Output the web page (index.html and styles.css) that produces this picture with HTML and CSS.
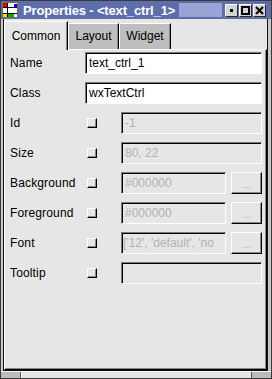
FILE: index.html
```html
<!DOCTYPE html>
<html lang="en">
<head>
    <meta charset="UTF-8">
    <title>Properties - &lt;text_ctrl_1&gt;</title>
    <link rel="stylesheet" href="styles.css">
</head>
<body>

    <div class="window">
        <div class="titlebar">
            <svg class="app-icon" width="16" height="16" viewBox="0 0 16 16">
                <rect x="0.5" y="0.5" width="15" height="15" fill="#fff" stroke="#6a6a6a"/>
                <rect x="1" y="1" width="4" height="4" fill="#e00000"/>
                <rect x="12" y="2" width="3" height="4" fill="#0000e0"/>
                <line x1="1" y1="5.5" x2="15" y2="5.5" stroke="#000"/>
                <line x1="5.5" y1="1" x2="5.5" y2="15" stroke="#000"/>
                <line x1="1" y1="11.5" x2="15" y2="11.5" stroke="#000"/>
                <rect x="1" y="12" width="4" height="3" fill="#f0e000"/>
                <rect x="6" y="12" width="6" height="3" fill="#00b000"/>
            </svg>
            <span class="title">Properties - &lt;text_ctrl_1&gt;</span>
            <span class="dots"></span>
            <div class="wm-buttons">
                <span class="wm-btn">
                    <svg width="11" height="11" viewBox="0 0 11 11"><rect x="4" y="4" width="3" height="3" fill="#000"/></svg>
                </span>
                <span class="wm-btn">
                    <svg width="11" height="11" viewBox="0 0 11 11"><rect x="2" y="2" width="7" height="7" fill="none" stroke="#000" stroke-width="2"/></svg>
                </span>
                <span class="wm-btn">
                    <svg width="11" height="11" viewBox="0 0 11 11"><path d="M2 2 L9 9 M9 2 L2 9" stroke="#000" stroke-width="2"/></svg>
                </span>
            </div>
        </div>

        <div class="client">
            <div class="tabs">
                <div class="tab active">Common</div>
                <div class="tab tab-layout">Layout</div>
                <div class="tab tab-widget">Widget</div>
            </div>
            <div class="page">
                <div class="form">
                    <div class="label">Name</div>
                    <div class="entry wide">text_ctrl_1</div>

                    <div class="label">Class</div>
                    <div class="entry wide">wxTextCtrl</div>

                    <div class="label">Id</div>
                    <span class="check"></span>
                    <div class="entry off">-1</div>

                    <div class="label">Size</div>
                    <span class="check"></span>
                    <div class="entry off">80, 22</div>

                    <div class="label">Background</div>
                    <span class="check"></span>
                    <div class="field">
                        <div class="entry off">#000000</div>
                        <div class="btn">...</div>
                    </div>

                    <div class="label">Foreground</div>
                    <span class="check"></span>
                    <div class="field">
                        <div class="entry off">#000000</div>
                        <div class="btn">...</div>
                    </div>

                    <div class="label">Font</div>
                    <span class="check"></span>
                    <div class="field">
                        <div class="entry off scrolled">['12', 'default', 'no</div>
                        <div class="btn">...</div>
                    </div>

                    <div class="label">Tooltip</div>
                    <span class="check"></span>
                    <div class="entry off"></div>
                </div>
            </div>
        </div>

        <div class="grips">
            <span class="grip side"></span>
            <span class="grip mid"></span>
            <span class="grip side"></span>
        </div>
    </div>

</body>
</html>
```

FILE: styles.css
```css
body {
    margin: 0;
    background: #e6e6e6;
    font-family: "Liberation Sans", Arial, sans-serif;
    font-size: 12px;
}
.window {
    width: 272px;
    height: 379px;
    box-sizing: border-box;
    border: 1px solid #3a3a3a;
    background: #c8c8c8; /* рамка вікна */
    display: flex;
    flex-direction: column;
}

/* Заголовок */
.titlebar {
    height: 18px;
    flex: none;
    display: flex;
    align-items: center;
    padding-left: 1px;
    background: #5e6eab;
    color: #fff;
}
.app-icon {
    flex: none;
}
.title {
    margin-left: 5px;
    font-weight: bold;
    font-size: 13px;
    letter-spacing: -0.15px;
    white-space: nowrap;
}
.dots {
    flex: 1;
    height: 14px;
    margin: 0 3px 0 4px;
    background-image: radial-gradient(circle, #9ba6d6 0.7px, transparent 0.9px);
    background-size: 2px 2px;
}
.wm-buttons {
    display: flex;
    gap: 1px;
    margin-right: 5px;
}
.wm-btn {
    width: 13px;
    height: 13px;
    box-sizing: border-box;
    border: 1px solid;
    border-color: #fff #2a2a2a #2a2a2a #fff;
    background: #d4d4d4;
    display: flex;
    align-items: center;
    justify-content: center;
}

/* Клієнтська частина */
.client {
    flex: 1;
    min-width: 0;
    margin: 0 3px 0 2px;
    border: 1px solid #111;
    border-top: none;
    background: #e6e6e6;
    padding-top: 2px;
    display: flex;
    flex-direction: column;
}
.tabs {
    display: flex;
    align-items: flex-end;
    height: 28px;
    flex: none;
}
.tab {
    box-sizing: border-box;
    height: 26px;
    padding-top: 4px;
    line-height: 16px;
    text-align: center;
    background: #bebebe;
    border-top: 1px solid #fff;
    border-left: 1px solid #fff;
    border-right: 1px solid #000;
    box-shadow: inset -1px 0 #8a8a8a;
    color: #000;
}
.tab.active {
    position: relative;
    z-index: 1;
    width: 64px;
    height: 29px;
    margin-bottom: -1px;
    padding-top: 6px;
    background: #e6e6e6;
}
.tab-layout {
    width: 51px;
}
.tab-widget {
    width: 52px;
}
.page {
    flex: 1;
    min-width: 0;
    border: 1px solid;
    border-color: #fff #000 #000 #fff;
    box-shadow: inset -1px -1px #8a8a8a;
    padding: 2px 4px 0 5px;
}

/* Форма властивостей */
.form {
    display: grid;
    grid-template-columns: 75px 36px minmax(0, 1fr);
    grid-auto-rows: 22px;
    row-gap: 8px;
    align-items: center;
}
.label {
    color: #000;
    white-space: nowrap;
    letter-spacing: 0.15px;
}
.entry {
    height: 22px;
    min-width: 0;
    box-sizing: border-box;
    border: 1px solid;
    border-color: #7a7a7a #fff #fff #7a7a7a;
    box-shadow: inset 1px 1px #000;
    padding: 0 2px 0 3px;
    line-height: 20px;
    white-space: nowrap;
    overflow: hidden;
    background: #fff;
    color: #000;
}
.entry.wide {
    grid-column: 2 / 4;
}
.entry.off {
    background: #e6e6e6;
    color: #b2b2b2;
}
.entry.scrolled {
    padding-left: 1px;
}
.check {
    width: 10px;
    height: 10px;
    box-sizing: border-box;
    margin-left: 2px;
    border: 1px solid;
    border-color: #fff #000 #000 #fff;
    box-shadow: inset -1px -1px #8a8a8a;
    background: #e6e6e6;
}
.field {
    display: flex;
    gap: 5px;
    min-width: 0;
}
.field .entry {
    flex: 1;
}
.btn {
    width: 31px;
    height: 22px;
    flex: none;
    box-sizing: border-box;
    border: 1px solid;
    border-color: #fff #000 #000 #fff;
    box-shadow: inset -1px -1px #8a8a8a;
    text-align: center;
    line-height: 22px;
    color: #b2b2b2;
    font-size: 11px;
}

/* Нижня рамка з ручками */
.grips {
    height: 7px;
    flex: none;
    box-sizing: border-box;
    border-top: 1px solid #f4f4f4;
    display: flex;
}
.grip.side {
    width: 19px;
    background: #bcbcbc;
    border-right: 1px solid #555;
}
.grip.mid {
    flex: 1;
    background: #e6e6e6;
    border-left: 1px solid #fff;
    border-right: 1px solid #555;
}
.grip.side:last-child {
    border-right: none;
}
```
